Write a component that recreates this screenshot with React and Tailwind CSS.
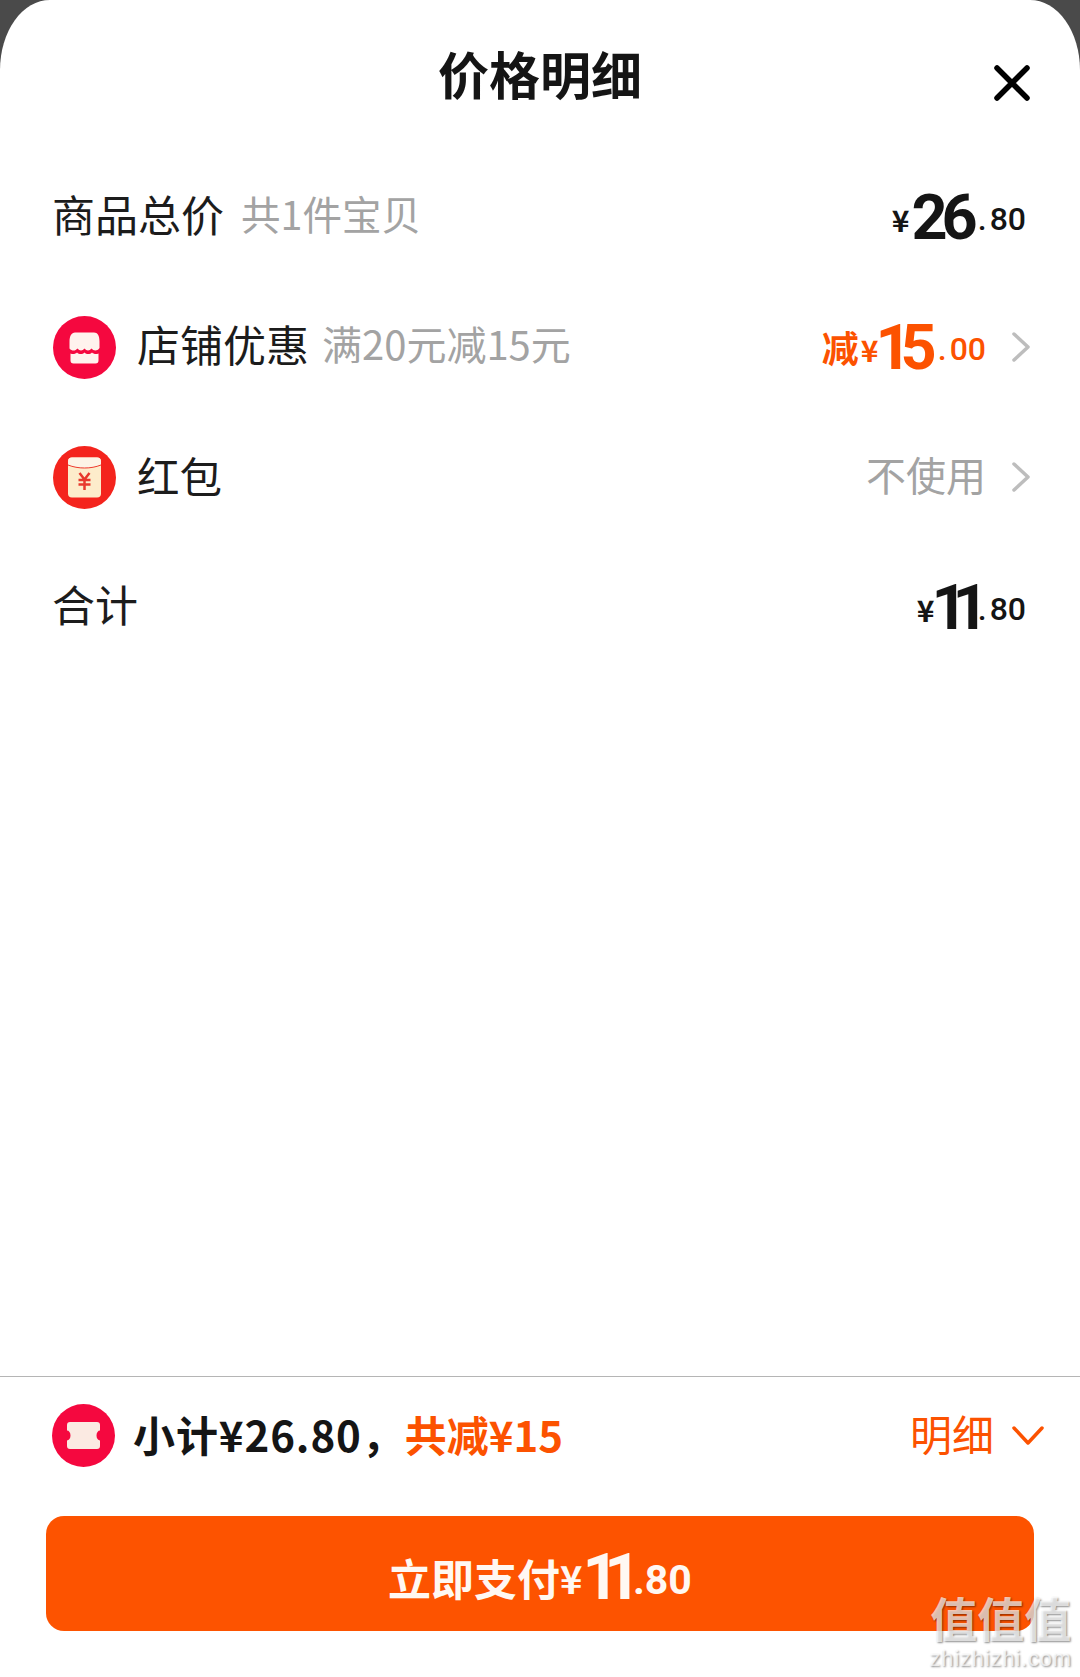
const CJK = "font-['Noto_Sans_CJK_SC',sans-serif]";
const NUM = "font-['Roboto','Noto_Sans_CJK_SC',sans-serif]";

function ShopIcon() {
  return (
    <svg viewBox="0 0 63 63" className="w-[63px] h-[63px] shrink-0">
      <circle cx="31.5" cy="31.5" r="31.5" fill="#f5083f" />
      <path d="M22 16.500h19c3.500 0 5.500 3 5.500 9v6.500c-2.500 3.500-6 3-8 .5-2 2.500-5 2.500-7 0-2 2.500-5 2.500-7 0-2 2.500-5.500 3-8 0v-6.500c0-6 2-9.500 5.500-9.500z" fill="#fff3ee" />
      <path d="M17.500 37.500c2.500 1 5 .5 6.500-1 2 2 5.500 2 7.500 0 2 2 5.500 2 7.500 0 1.500 1.500 4 2 6.500 1v7c0 2-1 3-3 3h-22c-2 0-3-1-3-3z" fill="#fff3ee" />
    </svg>
  );
}

function EnvelopeIcon() {
  return (
    <svg viewBox="0 0 63 63" className="w-[63px] h-[63px] shrink-0">
      <circle cx="31.5" cy="31.5" r="31.5" fill="#f4241d" />
      <rect x="15" y="11.500" width="33" height="40" rx="4" fill="#fdeccb" />
      <path d="M15 19v-3.500c0-2.500 1.500-4 4-4h25c2.500 0 4 1.500 4 4V19c-10 4-23 4-33 0z" fill="#fdf4e6" />
      <path d="M15 19c10 4 23 4 33 0" fill="none" stroke="#ee3a2e" strokeWidth="1" />
      <path d="M26.500 27l5 6.500 5-6.500M25.500 34h12M25.500 38.500h12M31.500 33v11" fill="none" stroke="#e8382c" strokeWidth="2.500" />
    </svg>
  );
}

function TicketIcon() {
  return (
    <svg viewBox="0 0 63 63" className="w-[63px] h-[63px] shrink-0">
      <circle cx="31.5" cy="31.500" r="31.500" fill="#f5083f" />
      <path d="M18 18h27c2 0 3 1 3 3v5.500a3.500 5 0 0 0 0 10V42c0 2-1 3-3 3H18c-2 0-3-1-3-3v-5.500a3.500 5 0 0 0 0-10V21c0-2 1-3 3-3z" fill="#fbeae2" />
    </svg>
  );
}

function Chevron() {
  return (
    <svg viewBox="0 0 18 30" className="w-[18px] h-[30px] shrink-0" fill="none" stroke="#bdbdbd" strokeWidth="3.500" strokeLinecap="round" strokeLinejoin="round">
      <path d="M2 2l14 13L2 28" />
    </svg>
  );
}

function Price({ big, cents, color = 'text-[#151515]', yenClass = 'mr-[2px]', bigClass = 'tracking-[-6px]', dotClass = 'ml-[6px]' }) {
  return (
    <div className={`flex items-center ${NUM} ${color}`}>
      <span className={`mt-[4px] text-[30px] font-bold leading-none ${CJK} ${yenClass}`}>¥</span>
      <span className={`text-[63px] font-bold leading-none ${bigClass}`}>{big}</span>
      <span className={`mr-[3px] mt-[4px] text-[32px] font-medium leading-none ${dotClass}`}>.</span>
      <span className="mt-[4px] text-[32px] font-medium leading-none">{cents}</span>
    </div>
  );
}

export default function App() {
  return (
    <div className={`relative h-[1677px] w-[1080px] overflow-hidden bg-[#4a4a4a] ${CJK}`}>
      <div className="flex h-full flex-col rounded-t-[50px_70px] bg-white">
        {/* Header */}
        <div className="relative flex h-[152px] shrink-0 justify-center pt-[36px]">
          <h1 className="text-[51px] font-bold leading-[74px] text-[#151515]">价格明细</h1>
          <svg viewBox="0 0 36 36" className="absolute right-[50px] top-[65px] h-[36px] w-[36px]" fill="none" stroke="#000" strokeWidth="5.500" strokeLinecap="round">
            <path d="M3 3l30 30M33 3L3 33" />
          </svg>
        </div>

        {/* Rows */}
        <div className="flex h-[130px] shrink-0 items-center justify-between pl-[52px] pr-[54px]">
          <div className="flex items-center pb-[8px]">
            <span className="text-[43px] text-[#1c1c1c]">商品总价</span>
            <span className="ml-[17px] text-[39.5px] text-[#a3a3a3]">共1件宝贝</span>
          </div>
          <Price big="26" cents="80" />
        </div>

        <div className="flex h-[130px] shrink-0 items-center justify-between pl-[53px] pr-[50px]">
          <div className="flex items-center">
            <ShopIcon />
            <div className="ml-[21px] flex items-center pb-[8px]">
              <span className="text-[43px] text-[#1c1c1c]">店铺优惠</span>
              <span className="ml-[13px] text-[40px] text-[#a3a3a3]">满20元减15元</span>
            </div>
          </div>
          <div className="flex items-center gap-[26px]">
            <div className="flex items-center text-[#fc5200]">
              <span className="mr-[2px] text-[37px] font-bold leading-none">减</span>
              <Price big="15" cents="00" color="text-[#fc5200]" yenClass="mr-[-3px]" bigClass="tracking-[-11px]" dotClass="ml-[12px]" />
            </div>
            <Chevron />
          </div>
        </div>

        <div className="flex h-[130px] shrink-0 items-center justify-between pl-[53px] pr-[50px]">
          <div className="flex items-center">
            <EnvelopeIcon />
            <span className="ml-[21px] pb-[4px] text-[42.5px] text-[#1c1c1c]">红包</span>
          </div>
          <div className="flex items-center gap-[26px]">
            <span className="pb-[6px] text-[40px] text-[#a3a3a3]">不使用</span>
            <Chevron />
          </div>
        </div>

        <div className="flex h-[130px] shrink-0 items-center justify-between pl-[52px] pr-[54px]">
          <span className="pb-[8px] text-[43px] text-[#1c1c1c]">合计</span>
          <Price big="11" cents="80" yenClass="mr-[-3px]" bigClass="tracking-[-15px]" dotClass="ml-[4px]" />
        </div>

        <div className="flex-1" />

        {/* Footer */}
        <div className="flex h-[118px] shrink-0 items-center justify-between border-t border-[#b5b5b5] pl-[52px] pr-[36px]">
          <div className="flex items-center">
            <TicketIcon />
            <div className="ml-[18px] flex items-center pb-[5px]">
              <span className="text-[42px] font-bold tracking-[0.9px] text-[#151515]">小计¥26.80，</span>
              <span className="text-[42px] font-bold text-[#fc5200]">共减¥15</span>
            </div>
          </div>
          <div className="flex items-center gap-[18px]">
            <span className="pb-[6px] text-[42px] text-[#fc5200]">明细</span>
            <svg viewBox="0 0 32 20" className="h-[20px] w-[32px]" fill="none" stroke="#fc5200" strokeWidth="3.500" strokeLinecap="round" strokeLinejoin="round">
              <path d="M2 2l14 15L30 2" />
            </svg>
          </div>
        </div>

        <div className="px-[46px] pb-[46px] pt-[22px]">
          <button className="flex h-[115px] w-full items-center justify-center rounded-[18px] bg-[#fd5300] pt-[8px] font-bold text-[#fff8f2]">
            <span className="text-[43px] leading-none">立即支付</span>
            <span className={`text-[38px] leading-none ${CJK}`}>¥</span>
            <span className={`text-[64px] leading-none tracking-[-15px] ${NUM}`}>11</span>
            <span className={`ml-[7px] mt-[6px] text-[41px] leading-none ${NUM}`}>.80</span>
          </button>
        </div>
      </div>

      {/* Watermark */}
      <div className="pointer-events-none absolute bottom-[8px] right-[8px] flex flex-col items-center text-white/70 [text-shadow:1px_1px_2px_rgba(0,0,0,0.45)]">
        <span className="text-[47px] font-bold leading-[48px]">值值值</span>
        <span className="mt-[8px] font-['Liberation_Sans',sans-serif] text-[22px] leading-[20px] tracking-[0.8px]">zhizhizhi.com</span>
      </div>
    </div>
  );
}
